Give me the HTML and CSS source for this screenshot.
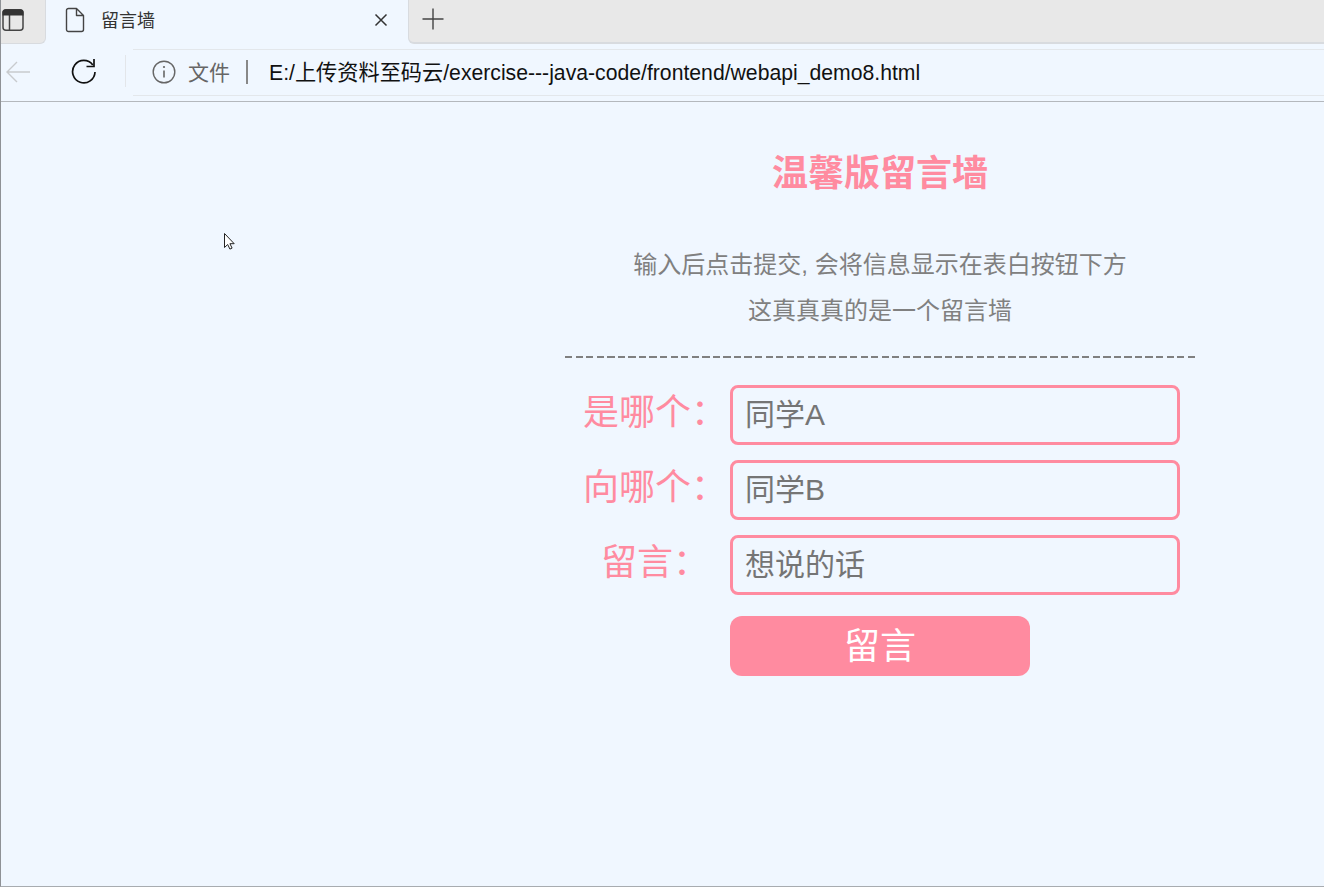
FILE: index.html
```html
<!DOCTYPE html>
<html lang="zh-CN">
<head>
<meta charset="utf-8">
<title>留言墙</title>
<link rel="stylesheet" href="styles.css">
</head>
<body>
<div class="window">
  <header class="chrome">
    <div class="tabstrip">
      <div class="tab-tool">
        <svg width="22" height="22" viewBox="0 0 22 22" class="icon"><rect x="1" y="0.800" width="20" height="20.400" rx="3" fill="none" stroke="#444" stroke-width="1.500"/><path d="M7.500 6v15" stroke="#444" stroke-width="1.500"/><path d="M4 0.500h14a3 3 0 0 1 3.500 3.500v2.500H0.500V4A3 3 0 0 1 4 0.500z" fill="#333"/></svg>
      </div>
      <div class="tab">
        <svg width="20" height="26" viewBox="0 0 20 26" class="icon"><path d="M3.500 1.500h8l7 7v14a2 2 0 0 1-2 2h-13a2 2 0 0 1-2-2v-19a2 2 0 0 1 2-2z M11.500 1.500v7h7" fill="none" stroke="#444" stroke-width="1.400" stroke-linejoin="round"/></svg>
        <span class="tab-title">留言墙</span>
        <svg width="14" height="14" viewBox="0 0 14 14" class="tab-close"><path d="M1.500 1.500l11 11M12.500 1.500l-11 11" stroke="#333" stroke-width="1.500"/></svg>
      </div>
      <div class="tab-rest">
        <svg width="22" height="22" viewBox="0 0 22 22" class="new-tab"><path d="M11 0.500v21M0.500 11h21" stroke="#444" stroke-width="1.400"/></svg>
      </div>
    </div>
    <div class="toolbar">
      <svg width="28" height="24" viewBox="0 0 28 24" class="back"><path d="M26 12H3M13 2L3 12l10 10" fill="none" stroke="#c8cbce" stroke-width="1.400"/></svg>
      <svg width="26" height="26" viewBox="0 0 26 26" class="reload"><path d="M21.800 7A11.200 11.200 0 1 0 24 14" fill="none" stroke="#111" stroke-width="1.700"/><path d="M23 1v7.500h-7.500" fill="none" stroke="#111" stroke-width="1.700"/></svg>
      <div class="toolbar-sep"></div>
      <div class="address">
        <svg width="24" height="24" viewBox="0 0 24 24" class="info"><circle cx="12" cy="12" r="10.800" fill="none" stroke="#666" stroke-width="1.400"/><path d="M12 10.500v7" stroke="#666" stroke-width="1.600"/><circle cx="12" cy="7" r="1.100" fill="#666"/></svg>
        <span class="scheme">文件</span>
        <span class="addr-sep"></span>
        <span class="url">E:/上传资料至码云/exercise---java-code/frontend/webapi_demo8.html</span>
      </div>
    </div>
  </header>
  <main class="page">
    <section class="wall">
      <h1 class="title">温馨版留言墙</h1>
      <p class="hint">输入后点击提交, 会将信息显示在表白按钮下方</p>
      <p class="hint">这真真真的是一个留言墙</p>
      <div class="dashes"></div>
      <form class="form">
        <div class="row"><label class="label" for="from">是哪个：</label><input class="input" id="from" placeholder="同学A"></div>
        <div class="row"><label class="label" for="to">向哪个：</label><input class="input" id="to" placeholder="同学B"></div>
        <div class="row"><label class="label" for="msg">留言：</label><input class="input" id="msg" placeholder="想说的话"></div>
        <div class="row row-submit"><button class="submit" type="button">留言</button></div>
      </form>
    </section>
    <svg width="14" height="20" viewBox="0 0 14 20" class="cursor"><path d="M1.500 1.500v14l3.200-3 2.200 4.600 2.200-1-2.200-4.400h4.300z" fill="#fff" stroke="#222" stroke-width="1"/></svg>
  </main>
</div>
</body>
</html>
```

FILE: styles.css
```css
* { box-sizing: border-box; }
html, body { margin: 0; height: 100%; }
body {
  background: #f0f7ff;
  font-family: "Liberation Sans", "Noto Sans CJK SC", sans-serif;
  overflow: hidden;
}
.window {
  height: 887px;
  display: flex;
  flex-direction: column;
  border-left: 1px solid #8f9296;
  border-bottom: 1px solid #a8acb0;
}
.chrome { flex: none; }
.tabstrip {
  height: 44px;
  display: flex;
  background: #f0f7ff;
}
.tab-tool {
  width: 45px;
  background: #e8e8e8;
  border-bottom: 1px solid #d8dbdf;
  border-right: 1px solid #d8dbdf;
  border-bottom-right-radius: 6px;
  display: flex;
  align-items: center;
  padding: 0 0 4px 1px;
}
.tab {
  width: 362px;
  display: flex;
  align-items: center;
  padding: 0 0 4px 19px;
}
.tab-title {
  margin: 0 0 3px 16px;
  font-size: 18px;
  color: #333;
  width: 273px;
}
.tab-rest {
  flex: 1;
  background: #e8e8e8;
  border-bottom: 2px solid #d8dbdf;
  border-left: 1px solid #d8dbdf;
  border-bottom-left-radius: 6px;
  display: flex;
  align-items: center;
  padding: 0 0 5px 13px;
}
.toolbar {
  height: 58px;
  display: flex;
  align-items: center;
  border-bottom: 1px solid #b4b8bd;
  padding-bottom: 4px;
}
.back { margin: 2px 0 0 3px; }
.reload { margin: 0 0 0 39px; }
.toolbar-sep {
  width: 1px;
  height: 32px;
  background: #e3e6ea;
  margin-left: 28px;
}
.address {
  flex: 1;
  height: 47px;
  margin-left: 7px;
  margin-top: 3px;
  display: flex;
  align-items: center;
  border-top: 1px solid #e3e7eb;
  border-bottom: 1px solid #e3e7eb;
  padding-left: 19px;
}
.scheme { margin: 0 0 2px 12px; font-size: 21px; color: #666; }
.addr-sep { width: 2px; height: 24px; background: #888; margin-left: 16px; }
.url { margin: 0 0 3px 21px; font-size: 21.200px; color: #111; white-space: nowrap; }
.page {
  flex: 1;
  position: relative;
  display: flex;
  justify-content: flex-end;
  padding-right: 129px;
}
.wall { width: 630px; text-align: center; }
.title {
  margin: 49px 0 0;
  font-size: 36px;
  line-height: 46px;
  font-weight: 700;
  color: #ff8ba0;
}
.hint {
  margin: 0;
  font-size: 24px;
  line-height: 46px;
  color: #808080;
}
.hint:first-of-type { margin-top: 45px; }
.dashes {
  height: 2px;
  margin-top: 22px;
  background: repeating-linear-gradient(90deg, #808080 0 7.300px, transparent 7.300px 10.554px);
}
.form { margin-top: 27px; padding: 0 15px; }
.row {
  display: flex;
  align-items: center;
  height: 60px;
  margin-bottom: 15px;
}
.label {
  width: 150px;
  text-align: center;
  font-size: 36px;
  color: #ff8ba0;
  position: relative;
  top: -6px;
}
.input {
  width: 450px;
  height: 60px;
  padding: 0 12px;
  border: 3px solid #ff8ba0;
  border-radius: 8px;
  background: transparent;
  font-family: inherit;
  font-size: 30px;
  outline: none;
}
.input::placeholder { color: #757575; opacity: 1; }
.row-submit { margin-top: 21px; padding-left: 150px; }
.submit {
  width: 300px;
  height: 60px;
  border: 0;
  border-radius: 12px;
  background: #ff8ba0;
  color: #fff;
  font-family: inherit;
  font-size: 36px;
  padding: 0 0 6px;
}
.cursor { position: absolute; left: 222px; top: 130px; }
```
